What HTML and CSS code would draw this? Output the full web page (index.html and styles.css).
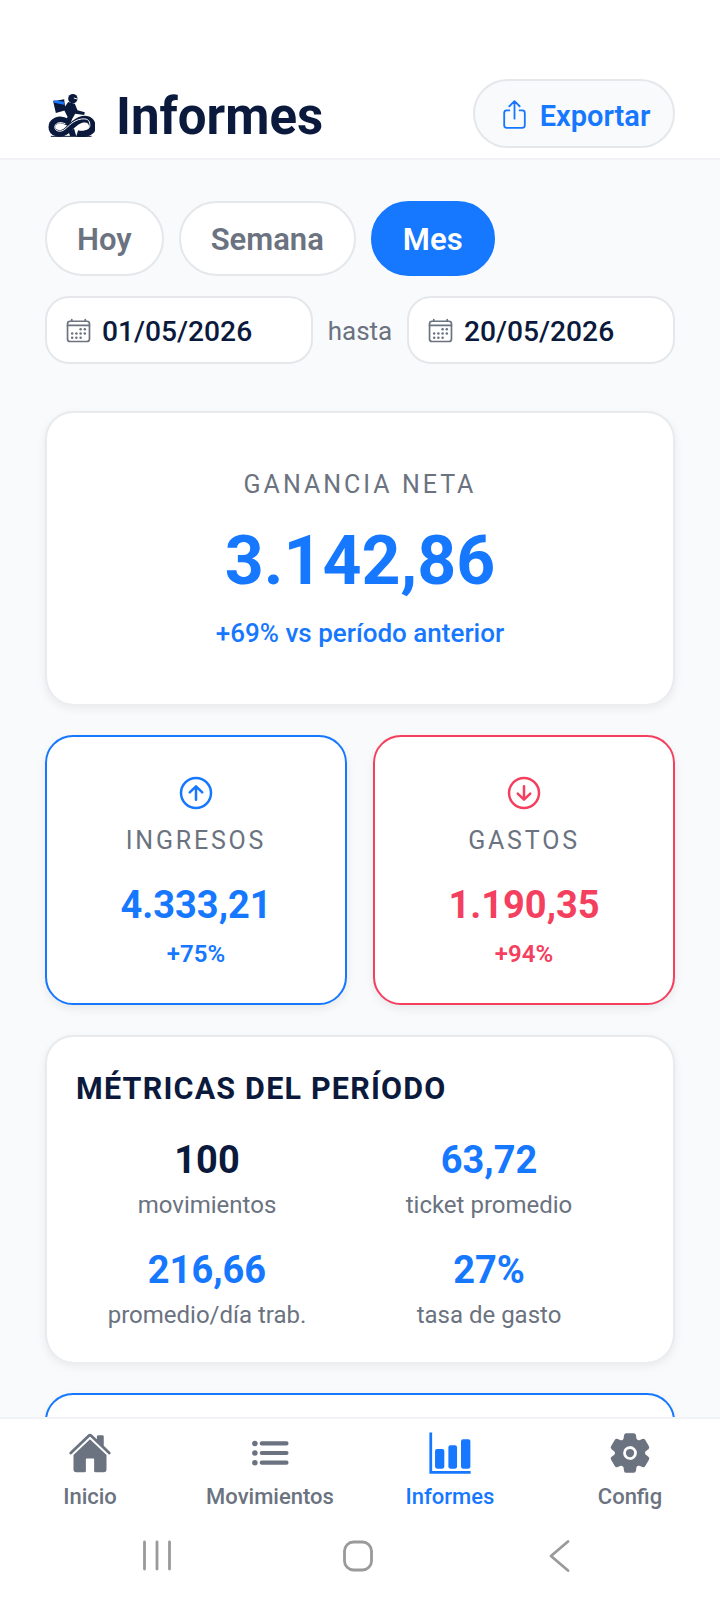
FILE: index.html
```html
<!DOCTYPE html>
<html lang="es">
<head>
<meta charset="utf-8">
<title>Informes</title>
<link rel="stylesheet" href="styles.css">
</head>
<body>
<div class="app">
  <header class="header">
    <svg class="logo" viewBox="145 97 140 132">
      <path class="logo-dark" d="M160 122l33-6 4 33-29 8z"/>
      <path class="logo-blue" d="M161 118l31 5 1 9-30-6z"/>
      <circle class="logo-dark" cx="219" cy="114" r="14"/>
      <path class="logo-white" d="M222 112l10 3"/>
      <path class="logo-dark" d="M205 124l20 5 8 20 22 6-2 8-27-4-9 16-9 22-13-5 8-24-12-24z"/>
      <path class="logo-ring" d="M202 184c-24-14-46-2-46 16s26 24 42 12 28-32 50-36 30 10 30 24-26 24-46 18"/>
      <path class="logo-white" d="M197 190c-18-9-32-2-32 10s18 16 30 6 26-28 50-31 25 10 25 20-14 14-28 12"/>
      <path class="logo-dark" d="M205 212l18-8 6 22-18 0zM147 186l10-2 0 10zM274 198l10 4-6 8z"/>
      <path class="logo-thin" d="M153 227h122"/>
    </svg>
    <h1 class="title">Informes</h1>
    <button class="export">
      <svg class="export-icon" viewBox="0 0 512 512"><path d="M336 192h40a40 40 0 0140 40v192a40 40 0 01-40 40H136a40 40 0 01-40-40V232a40 40 0 0140-40h40M336 128l-80-80-80 80M256 321V48"/></svg>
      <span class="export-text">Exportar</span>
    </button>
  </header>

  <main class="content">
    <div class="tabs">
      <div class="tab">Hoy</div>
      <div class="tab">Semana</div>
      <div class="tab tab-active">Mes</div>
    </div>

    <div class="dates">
      <div class="date">
        <svg class="cal" viewBox="0 0 512 512"><rect class="cal-line" x="48" y="80" width="416" height="384" rx="48"/><circle cx="296" cy="232" r="24"/><circle cx="376" cy="232" r="24"/><circle cx="296" cy="312" r="24"/><circle cx="376" cy="312" r="24"/><circle cx="136" cy="312" r="24"/><circle cx="216" cy="312" r="24"/><circle cx="136" cy="392" r="24"/><circle cx="216" cy="392" r="24"/><circle cx="296" cy="392" r="24"/><path class="cal-line" d="M128 48v32M384 48v32M464 160H48"/></svg>
        <span>01/05/2026</span>
      </div>
      <span class="hasta">hasta</span>
      <div class="date">
        <svg class="cal" viewBox="0 0 512 512"><rect class="cal-line" x="48" y="80" width="416" height="384" rx="48"/><circle cx="296" cy="232" r="24"/><circle cx="376" cy="232" r="24"/><circle cx="296" cy="312" r="24"/><circle cx="376" cy="312" r="24"/><circle cx="136" cy="312" r="24"/><circle cx="216" cy="312" r="24"/><circle cx="136" cy="392" r="24"/><circle cx="216" cy="392" r="24"/><circle cx="296" cy="392" r="24"/><path class="cal-line" d="M128 48v32M384 48v32M464 160H48"/></svg>
        <span>20/05/2026</span>
      </div>
    </div>

    <section class="card hero">
      <div class="hero-label">GANANCIA NETA</div>
      <div class="hero-value">3.142,86</div>
      <div class="hero-delta">+69% vs período anterior</div>
    </section>

    <div class="pair">
      <section class="card stat stat-up">
        <svg class="stat-icon" viewBox="0 0 512 512"><path d="M176 249.38L256 170l80 79.38M256 181.03V342"/><path d="M448 256c0-106-86-192-192-192S64 150 64 256s86 192 192 192 192-86 192-192z"/></svg>
        <div class="stat-label">INGRESOS</div>
        <div class="stat-value">4.333,21</div>
        <div class="stat-delta">+75%</div>
      </section>
      <section class="card stat stat-down">
        <svg class="stat-icon" viewBox="0 0 512 512"><path d="M176 262.62L256 342l80-79.38M256 330.97V170"/><path d="M448 256c0-106-86-192-192-192S64 150 64 256s86 192 192 192 192-86 192-192z"/></svg>
        <div class="stat-label">GASTOS</div>
        <div class="stat-value">1.190,35</div>
        <div class="stat-delta">+94%</div>
      </section>
    </div>

    <section class="card metrics">
      <h2 class="metrics-title">MÉTRICAS DEL PERÍODO</h2>
      <div class="metrics-grid">
        <div class="metric"><div class="metric-value metric-dark">100</div><div class="metric-label">movimientos</div></div>
        <div class="metric"><div class="metric-value">63,72</div><div class="metric-label">ticket promedio</div></div>
        <div class="metric"><div class="metric-value">216,66</div><div class="metric-label">promedio/día trab.</div></div>
        <div class="metric"><div class="metric-value">27%</div><div class="metric-label">tasa de gasto</div></div>
      </div>
    </section>

    <section class="card next-card"></section>
  </main>

  <nav class="nav">
    <div class="nav-item">
      <svg class="nav-icon" viewBox="0 0 512 512"><path d="M261.56 101.28a8 8 0 00-11.06 0L66.4 277.15a8 8 0 00-2.47 5.79L63.9 448a32 32 0 0032 32H192a16 16 0 0016-16V328a8 8 0 018-8h80a8 8 0 018 8v136a16 16 0 0016 16h96.06a32 32 0 0032-32V282.94a8 8 0 00-2.47-5.79z"/><path d="M490.91 244.15l-74.8-71.56V64a16 16 0 00-16-16h-48a16 16 0 00-16 16v32l-57.92-55.38C272.77 35.14 264.71 32 256 32c-8.68 0-16.72 3.14-22.14 8.63l-212.7 203.5c-6.22 6-7 15.87-1.34 22.37A16 16 0 0043 267.56L250.5 69.28a8 8 0 0111.06 0l207.52 198.28a16 16 0 0022.59-.44c6.14-6.36 5.63-16.86-.76-22.97z"/></svg>
      <span>Inicio</span>
    </div>
    <div class="nav-item">
      <svg class="nav-icon" viewBox="0 0 512 512"><path class="list-line" d="M160 144h288M160 256h288M160 368h288"/><circle cx="80" cy="144" r="32"/><circle cx="80" cy="256" r="32"/><circle cx="80" cy="368" r="32"/></svg>
      <span>Movimientos</span>
    </div>
    <div class="nav-item nav-active">
      <svg class="nav-icon" viewBox="0 0 512 512"><path d="M496 496H16V16h32v448h448v32z"/><rect x="82" y="210" width="108" height="228" rx="24"/><rect x="237" y="167" width="101" height="271" rx="24"/><rect x="384" y="97" width="109" height="341" rx="24"/></svg>
      <span>Informes</span>
    </div>
    <div class="nav-item">
      <svg class="nav-icon" viewBox="0 0 512 512"><circle cx="256" cy="256" r="48"/><path d="M470.39 300l-.47-.38-31.56-24.75a16.11 16.11 0 01-6.1-13.33v-11.56a16 16 0 016.11-13.22L469.92 212l.47-.38a26.68 26.68 0 005.9-34.06l-42.71-73.9a1.59 1.59 0 01-.13-.22A26.86 26.86 0 00401 92.14l-.35.13-37.1 14.93a15.94 15.94 0 01-14.47-1.29q-4.92-3.1-10-5.86a15.94 15.94 0 01-8.19-11.82l-5.59-39.59-.12-.72A27.22 27.22 0 00298.76 26h-85.52a26.92 26.92 0 00-26.45 22.39l-.09.56-5.57 39.67a16 16 0 01-8.13 11.82 175.21 175.21 0 00-10 5.82 15.92 15.92 0 01-14.43 1.27l-37.13-15-.35-.14a26.87 26.87 0 00-32.48 11.34l-.13.22-42.77 73.95a26.71 26.71 0 005.9 34.1l.47.38 31.56 24.75a16.11 16.11 0 016.1 13.33v11.56a16 16 0 01-6.11 13.22L42.08 300l-.47.38a26.68 26.68 0 00-5.9 34.06l42.71 73.9a1.59 1.59 0 01.13.22 26.86 26.86 0 0032.45 11.3l.35-.13 37.07-14.93a15.94 15.94 0 0114.47 1.29q4.92 3.11 10 5.86a15.94 15.94 0 018.19 11.82l5.56 39.59.12.72A27.22 27.22 0 00213.24 486h85.52a26.92 26.92 0 0026.45-22.39l.09-.56 5.57-39.67a16 16 0 018.18-11.82c3.42-1.84 6.76-3.79 10-5.82a15.92 15.92 0 0114.43-1.27l37.13 14.95.35.14a26.85 26.85 0 0032.48-11.34 2.53 2.53 0 01.13-.22l42.71-73.89a26.7 26.7 0 00-5.89-34.11zm-134.48-40.24a80 80 0 11-83.66-83.67 80.21 80.21 0 0183.66 83.67z"/></svg>
      <span>Config</span>
    </div>
  </nav>

  <div class="sysbar">
    <svg class="sys-icon" viewBox="0 0 720 60">
      <path d="M144.500 3v27M157 3v27M169.500 3v27"/>
      <rect x="344.500" y="3" width="27" height="28" rx="9"/>
      <path d="M568 2.500L551 17l17 14.500"/>
    </svg>
  </div>
</div>
</body>
</html>
```
FILE: styles.css
```css
* { box-sizing: border-box; }
html, body { margin: 0; padding: 0; }
body { font-family: Roboto, "Liberation Sans", sans-serif; background: #fff; }
.app { width: 720px; height: 1600px; display: flex; flex-direction: column; overflow: hidden; background: #f8fafc; }

.header { height: 160px; flex: none; background: #fff; border-bottom: 2px solid #f1f2f5; padding: 79px 45px 10px 48px; display: flex; align-items: center; }
.logo { width: 47px; height: 44px; flex: none; margin-right: 21px; margin-top: 3px; }
.logo-dark { fill: #0b1a3c; }
.logo-blue { fill: #1677ff; }
.logo-ring { fill: none; stroke: #0b1a3c; stroke-width: 20; }
.logo-white { fill: none; stroke: #fff; stroke-width: 3; }
.logo-thin { fill: none; stroke: #0b1a3c; stroke-width: 3; }
.title { margin: 6px 0 0; flex: 1; font-size: 51px; font-weight: 700; color: #0b1a3c; line-height: 1; }
.export { height: 69px; width: 202px; display: flex; align-items: center; justify-content: center; gap: 9px; background: #f8fafc; border: 2px solid #e5e7eb; border-radius: 35px; color: #1677ff; font: 600 29px Roboto, sans-serif; padding: 2px 0 0; }
.export-icon { width: 33px; height: 33px; fill: none; stroke: currentColor; stroke-width: 28; stroke-linecap: round; stroke-linejoin: round; }
.export-text { padding-top: 2px; }

.content { flex: 1; min-height: 0; overflow: hidden; padding: 41px 45px 0; }
.tabs { display: flex; gap: 15px; }
.tab { height: 75px; padding: 2px 30px 0; display: flex; align-items: center; background: #fff; border: 2px solid #e5e7eb; border-radius: 38px; color: #6b7280; font-size: 31px; font-weight: 600; }
.tab-active { background: #1677ff; border-color: #1677ff; color: #fff; }

.dates { display: flex; align-items: center; justify-content: space-between; margin-top: 20px; }
.date { width: 268px; height: 68px; display: flex; align-items: center; gap: 10px; padding: 0 0 0 18px; background: #fff; border: 2px solid #e5e7eb; border-radius: 24px; color: #0b1a3c; font-size: 28.2px; font-weight: 500; }
.date span { padding-top: 2px; }
.cal { width: 27px; height: 27px; fill: #6b7280; }
.cal-line { fill: none; stroke: #6b7280; stroke-width: 32; stroke-linecap: round; stroke-linejoin: round; }
.hasta { font-size: 26px; color: #6b7280; padding-top: 1px; }

.card { background: #fff; border-radius: 28px; border: 2px solid #e8eaee; box-shadow: 0 4px 10px rgba(0,0,0,.07); }
.hero { height: 293px; margin-top: 47px; display: flex; flex-direction: column; align-items: center; padding-top: 56px; border-bottom: 0; }
.hero-label { font-size: 25px; letter-spacing: 3px; color: #6b7280; line-height: 32px; }
.hero-value { font-size: 68px; font-weight: 700; color: #1677ff; line-height: 80px; margin-top: 20px; }
.hero-delta { font-size: 26px; font-weight: 500; color: #1677ff; line-height: 32px; margin-top: 16px; }

.pair { display: flex; justify-content: space-between; margin-top: 31px; }
.stat { width: 302px; height: 270px; display: flex; flex-direction: column; align-items: center; padding-top: 36px; }
.stat-up { border-color: #1677ff; color: #1677ff; }
.stat-down { border-color: #f43f5e; color: #f43f5e; }
.stat-icon { width: 40px; height: 40px; fill: none; stroke: currentColor; stroke-width: 32; stroke-linecap: round; stroke-linejoin: round; }
.stat-label { font-size: 25px; letter-spacing: 2.8px; color: #6b7280; line-height: 32px; margin-top: 12px; }
.stat-value { font-size: 38px; font-weight: 700; line-height: 48px; margin-top: 24px; }
.stat-delta { font-size: 24px; font-weight: 600; line-height: 30px; margin-top: 10px; }

.metrics { height: 327px; margin-top: 30px; padding: 33px 29px 0; border-bottom: 0; }
.metrics-title { margin: 0; font-size: 30.5px; font-weight: 700; letter-spacing: 1.2px; color: #0b1a3c; line-height: 38px; }
.metrics-grid { display: grid; grid-template-columns: 282px 282px; row-gap: 26px; margin: 29px 0 0 -10px; }
.metric { text-align: center; }
.metric-value { font-size: 38px; font-weight: 700; color: #1677ff; line-height: 46px; }
.metric-dark { color: #0b1a3c; }
.metric-label { font-size: 24px; color: #6b7280; line-height: 32px; margin-top: 6px; }

.next-card { height: 200px; margin-top: 31px; border-color: #1677ff; }

.nav { flex: none; height: 119px; display: grid; grid-template-columns: repeat(4, 1fr); background: #fff; border-top: 2px solid #f1f2f5; padding-top: 12px; }
.nav-item { display: flex; flex-direction: column; align-items: center; gap: 8px; color: #6b7280; font-size: 22px; font-weight: 500; line-height: 28px; }
.nav-active { color: #1677ff; }
.nav-icon { width: 44px; height: 44px; fill: currentColor; }
.list-line { fill: none; stroke: currentColor; stroke-width: 48; stroke-linecap: round; }

.sysbar { flex: none; height: 64px; padding-top: 3px; background: #fff; }
.sys-icon { display: block; width: 720px; height: 60px; fill: none; stroke: #9a9a9a; stroke-width: 2.8; stroke-linecap: round; stroke-linejoin: round; }
```
